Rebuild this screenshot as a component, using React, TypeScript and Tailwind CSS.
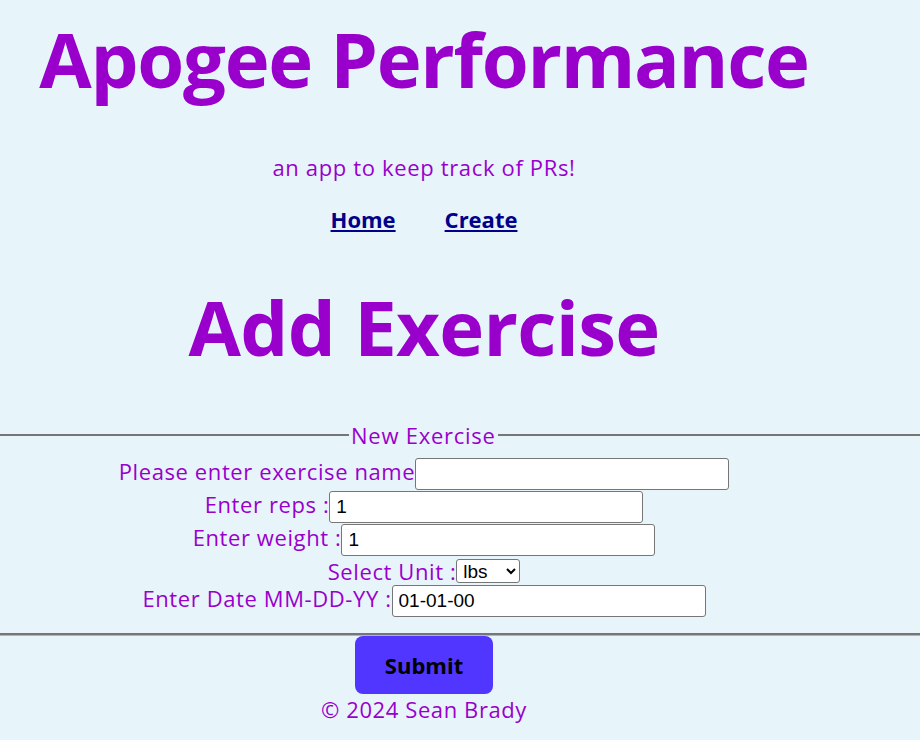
export default function App() {
  const purple = "text-[#9900cc]";
  const inputCls =
    "h-[32px] w-[314px] rounded-[3px] border border-[#767676] bg-white px-[6px] text-[19px] tracking-normal text-black [font-family:'Liberation_Sans',Arial,sans-serif]";
  return (
    <div className="min-h-[740px] w-[920px] overflow-hidden bg-[#e7f4fa] [font-family:'Open_Sans',sans-serif]">
      <div className="w-[848px] text-center">
        <h1 className={`text-[76px] font-bold leading-[117px] tracking-[-1.3px] ${purple}`}>Apogee Performance</h1>
        <p className={`mt-[35px] text-[22px] leading-[30px] tracking-[0.65px] ${purple}`}>an app to keep track of PRs!</p>
        <nav className="mt-[22px] flex justify-center gap-[49px] text-[22px] font-bold leading-[30px]">
          <a href="#" className="text-[#00008b] underline">Home</a>
          <a href="#" className="text-[#00008b] underline">Create</a>
        </nav>
        <h2 className={`mt-[34px] text-[76px] font-bold leading-[117px] tracking-[-0.7px] ${purple}`}>Add Exercise</h2>
      </div>
      <fieldset className="mt-[35px] w-[920px] border-x-0 border-y-2 border-solid border-[#767676] px-0 pt-[8px] pb-[16px] shadow-[0_1px_0_#b4b4b4]">
        <legend className={`ml-[349px] px-[2px] text-[22px] leading-[30px] tracking-[0.75px] ${purple}`}>New Exercise</legend>
        <div className={`flex w-[848px] flex-col gap-[1px] text-[22px] tracking-[0.6px] ${purple}`}>
          <div className="flex items-baseline justify-center">
            <label className="leading-[20px]">Please enter exercise name</label>
            <input className={inputCls} />
          </div>
          <div className="flex items-baseline justify-center">
            <label className="leading-[20px]">Enter reps :</label>
            <input defaultValue="1" className={inputCls} />
          </div>
          <div className="flex items-baseline justify-center">
            <label className="leading-[20px]">Enter weight :</label>
            <input defaultValue="1" className={inputCls} />
          </div>
          <div className="flex h-[27px] items-center justify-center">
            <label className="leading-[20px]">Select Unit :</label>
            <select defaultValue="lbs" className="h-[24px] w-[64px] rounded-[3px] border border-[#767676] bg-white pl-[2px] text-[19px] tracking-normal text-black [font-family:'Liberation_Sans',Arial,sans-serif]">
              <option value="lbs">lbs</option>
              <option value="kg">kg</option>
            </select>
          </div>
          <div className="flex items-baseline justify-center">
            <label className="leading-[20px]">Enter Date MM-DD-YY :</label>
            <input defaultValue="01-01-00" className={inputCls} />
          </div>
        </div>
      </fieldset>
      <div className="flex w-[848px] flex-col items-center">
        <button className="mt-[1px] h-[58px] w-[138px] rounded-[8px] bg-[#5036ff] text-[22px] font-bold text-black">Submit</button>
        <p className={`text-[22px] leading-[30px] tracking-[0.6px] ${purple}`}>© 2024 Sean Brady</p>
      </div>
    </div>
  );
}
